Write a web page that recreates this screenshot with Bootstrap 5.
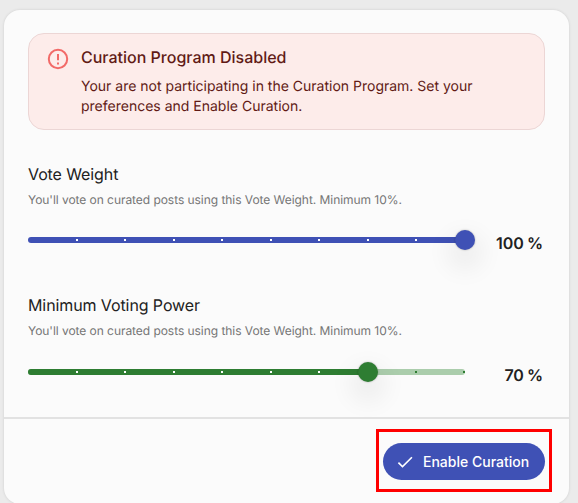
<!DOCTYPE html>
<html lang="en">
<head>
<meta charset="utf-8">
<title>Curation</title>
<link href="https://cdn.jsdelivr.net/npm/bootstrap@5.3.0/dist/css/bootstrap.min.css" rel="stylesheet">
<style>
html,body{height:503px;overflow:hidden}
body{background:#ebebeb;font-family:"Inter","Liberation Sans",sans-serif;padding:10px 9px 0 4px;text-rendering:geometricPrecision}
.panel{background:#fbfbfb;border:0;border-radius:16px;height:494px;box-shadow:0 0 3px rgba(0,0,0,.12)}
.panel-main{padding:23px 24px 0 24px;height:407px}
.warn{background:#fdecea;border:1px solid #ecd6d5;border-radius:16px;height:97px;padding:13px 18px;color:#611a15;margin:0}
.warn-icon{width:22px;height:22px;flex:none;margin-right:12px;margin-top:1px}
.warn-title{font-size:16px;font-weight:500;line-height:20px;margin-bottom:10px}
.warn-body{font-size:14px;line-height:20px}
.set-title{font-size:16px;line-height:24px;color:#212121;font-weight:400;letter-spacing:-.1px}
.set-help{font-size:12px;line-height:18px;color:#757575;margin-top:5px;letter-spacing:-.05px}
.group-a{margin-top:32px}
.group-b{margin-top:39px}
.slider-row{height:28px;margin-top:17px}
.group-b .slider-row{margin-top:18px}
.slider{position:relative;width:437px;height:6px;border-radius:3px;flex:none;margin-top:11px}
.slider.blue{background:#3f51b5}
.slider.green{background:#abcdac}
.slider-fill{position:absolute;left:0;top:0;height:6px;border-radius:3px;background:#2e7d32}
.dot{position:absolute;top:2px;width:2px;height:2px;margin-left:-1px;background:#fff}
.green .dot.off{background:#2e7d32}
.knob{position:absolute;top:-7px;width:20px;height:20px;margin-left:-10px;border-radius:50%;box-shadow:0 0 2px rgba(0,0,0,.3),0 12px 24px 8px rgba(0,0,0,.06)}
.blue .knob{background:#3f51b5}
.green .knob{background:#2e7d32}
.pct{font-size:16px;font-weight:600;color:#212121;margin-left:auto;margin-right:2px;margin-top:5px;word-spacing:-1px}
.rule{height:2px;background:#e2e2e2}
.foot{padding:10px 17px 0 0}
.mark-box{border:3px solid #f00;padding:11px 4px 9px}
.go-btn{background:#3f51b5;border:0;color:#fff;border-radius:18.5px;height:37px;width:162px;font-size:14px;font-weight:500;padding:0 16px 0 12px;white-space:nowrap}
.go-btn:hover{background:#3f51b5;color:#fff}
.go-btn svg{width:20px;height:20px;margin-right:8px;flex:none}
</style>
</head>
<body>
<div class="card panel">
  <div class="panel-main">
    <div class="alert warn d-flex" role="alert">
      <svg class="warn-icon" viewBox="0 0 22 22" fill="none" stroke="#f26a68" stroke-width="2"><circle cx="11" cy="11" r="9.2"/><path d="M11 6v6.2M11 14.6v1.8" stroke-linecap="butt"/></svg>
      <div>
        <div class="warn-title">Curation Program Disabled</div>
        <div class="warn-body">Your are not participating in the Curation Program. Set your preferences and Enable Curation.</div>
      </div>
    </div>

    <div class="group-a">
      <div class="set-title">Vote Weight</div>
      <div class="set-help">You'll vote on curated posts using this Vote Weight. Minimum 10%.</div>
      <div class="slider-row d-flex">
        <div class="slider blue">
          <span class="dot" style="left:11.1%"></span><span class="dot" style="left:22.2%"></span><span class="dot" style="left:33.3%"></span><span class="dot" style="left:44.4%"></span><span class="dot" style="left:55.6%"></span><span class="dot" style="left:66.7%"></span><span class="dot" style="left:77.8%"></span><span class="dot" style="left:88.9%"></span>
          <span class="knob" style="left:100%"></span>
        </div>
        <div class="pct">100 %</div>
      </div>
    </div>

    <div class="group-b">
      <div class="set-title">Minimum Voting Power</div>
      <div class="set-help">You'll vote on curated posts using this Vote Weight. Minimum 10%.</div>
      <div class="slider-row d-flex">
        <div class="slider green">
          <div class="slider-fill" style="width:77.8%"></div>
          <span class="dot" style="left:11.1%"></span><span class="dot" style="left:22.2%"></span><span class="dot" style="left:33.3%"></span><span class="dot" style="left:44.4%"></span><span class="dot" style="left:55.6%"></span><span class="dot" style="left:66.7%"></span><span class="dot off" style="left:88.9%"></span><span class="dot off" style="left:99.8%"></span>
          <span class="knob" style="left:77.8%"></span>
        </div>
        <div class="pct">70 %</div>
      </div>
    </div>
  </div>
  <div class="rule"></div>
  <div class="foot d-flex justify-content-end">
    <div class="mark-box">
      <button type="button" class="btn go-btn d-flex align-items-center">
        <svg viewBox="0 0 24 24" fill="#fff"><path d="M9 16.2 4.8 12l-1.4 1.4L9 19 21 7l-1.4-1.4z"/></svg>
        Enable Curation
      </button>
    </div>
  </div>
</div>
<script src="https://cdn.jsdelivr.net/npm/bootstrap@5.3.0/dist/js/bootstrap.bundle.min.js"></script>
</body>
</html>
